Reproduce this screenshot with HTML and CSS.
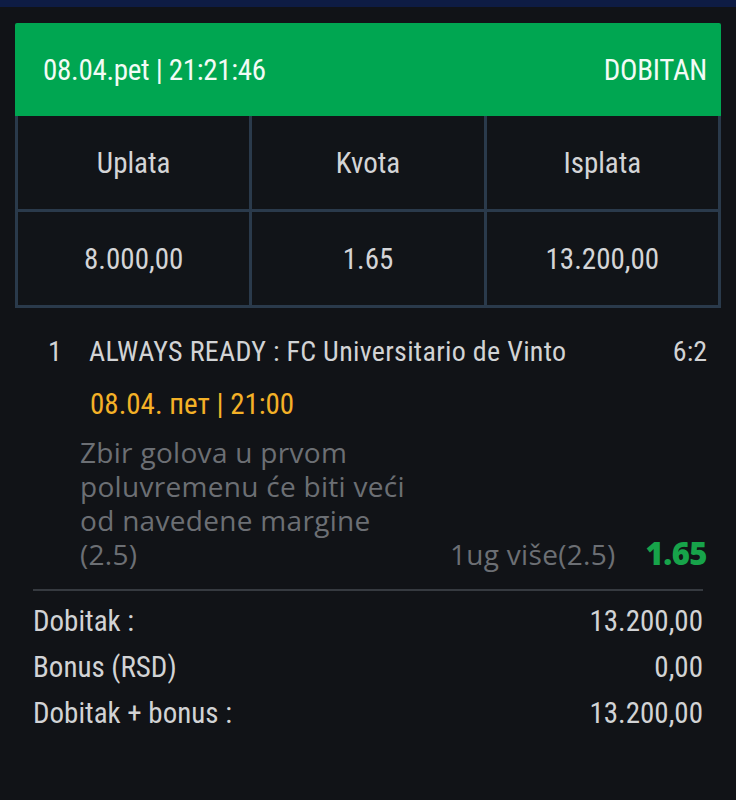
FILE: index.html
```html
<!DOCTYPE html>
<html lang="sr">
<head>
    <meta charset="UTF-8">
    <meta name="viewport" content="width=device-width, initial-scale=1.0">
    <title>Tiket</title>
    <link rel="stylesheet" href="styles.css">
</head>
<body>
    <div class="topbar"></div>

    <div class="ticket">
        <div class="ticket-head">
            <span>08.04.pet | 21:21:46</span>
            <span>DOBITAN</span>
        </div>

        <div class="stats">
            <div class="cell">Uplata</div>
            <div class="cell">Kvota</div>
            <div class="cell">Isplata</div>
            <div class="cell">8.000,00</div>
            <div class="cell">1.65</div>
            <div class="cell">13.200,00</div>
        </div>
    </div>

    <div class="bet">
        <div class="match">
            <span class="num">1</span>
            <span class="teams">ALWAYS READY : FC Universitario de Vinto</span>
            <span class="score">6:2</span>
        </div>
        <div class="kickoff">08.04. пет | 21:00</div>
        <div class="pick">
            <div class="desc">Zbir golova u prvom poluvremenu će biti veći od navedene margine (2.5)</div>
            <div class="tip">
                <span class="tip-name">1ug više(2.5)</span>
                <span class="tip-odd">1.65</span>
            </div>
        </div>

        <div class="summary">
            <div class="row"><span>Dobitak :</span><span>13.200,00</span></div>
            <div class="row"><span>Bonus (RSD)</span><span>0,00</span></div>
            <div class="row"><span>Dobitak + bonus :</span><span>13.200,00</span></div>
        </div>
    </div>
</body>
</html>
```

FILE: styles.css
```css
body {
    margin: 0;
    background-color: #111317;
    color: #d2d3d5;
    font-family: Roboto, sans-serif;
    font-stretch: 75%;
}
.topbar { height: 7px; background-color: #0e1c44; }

.ticket { margin: 16px 15px 0 15px; }
.ticket-head {
    height: 93px;
    display: flex;
    justify-content: space-between;
    align-items: center;
    padding: 0 14px 0 28px;
    background-color: #00a651;
    color: #f2fbf5;
    font-size: 29px;
    letter-spacing: -0.3px;
    border-radius: 2px 2px 0 0;
}

.stats {
    display: grid;
    grid-template-columns: repeat(3, 1fr);
    grid-auto-rows: 93px;
    gap: 3px;
    padding: 0 3px 3px 3px;
    background-color: #2a3a4b;
}
.cell {
    display: flex;
    align-items: center;
    justify-content: center;
    background-color: #111418;
    font-size: 29px;
    color: #d4d5d7;
}

.bet { padding: 26px 29px 0 33px; }
.match {
    display: flex;
    line-height: 36px;
    font-size: 28px;
}
.num { width: 56px; padding-left: 15px; box-sizing: border-box; }
.teams { flex: 1; letter-spacing: 0.3px; }
.kickoff {
    margin: 14px 0 0 57px;
    line-height: 40px;
    font-size: 29px;
    color: #f4b127;
}

.pick {
    display: flex;
    align-items: flex-end;
    justify-content: space-between;
    margin: 11px 0 0 47px;
    font-family: "Open Sans", sans-serif;
    font-stretch: normal;
    font-size: 28px;
    letter-spacing: 0.3px;
    line-height: 34px;
    color: #6c6f74;
}
.desc { width: 345px; }
.tip { display: flex; align-items: baseline; gap: 30px; }
.tip-odd {
    font-weight: 800;
    font-size: 31px;
    letter-spacing: -0.5px;
    color: #17a34a;
}

.summary {
    margin: 18px 4px 0 0;
    padding-top: 7px;
    border-top: 2px solid #363a40;
}
.row {
    display: flex;
    justify-content: space-between;
    line-height: 46px;
    font-size: 29px;
}
```
